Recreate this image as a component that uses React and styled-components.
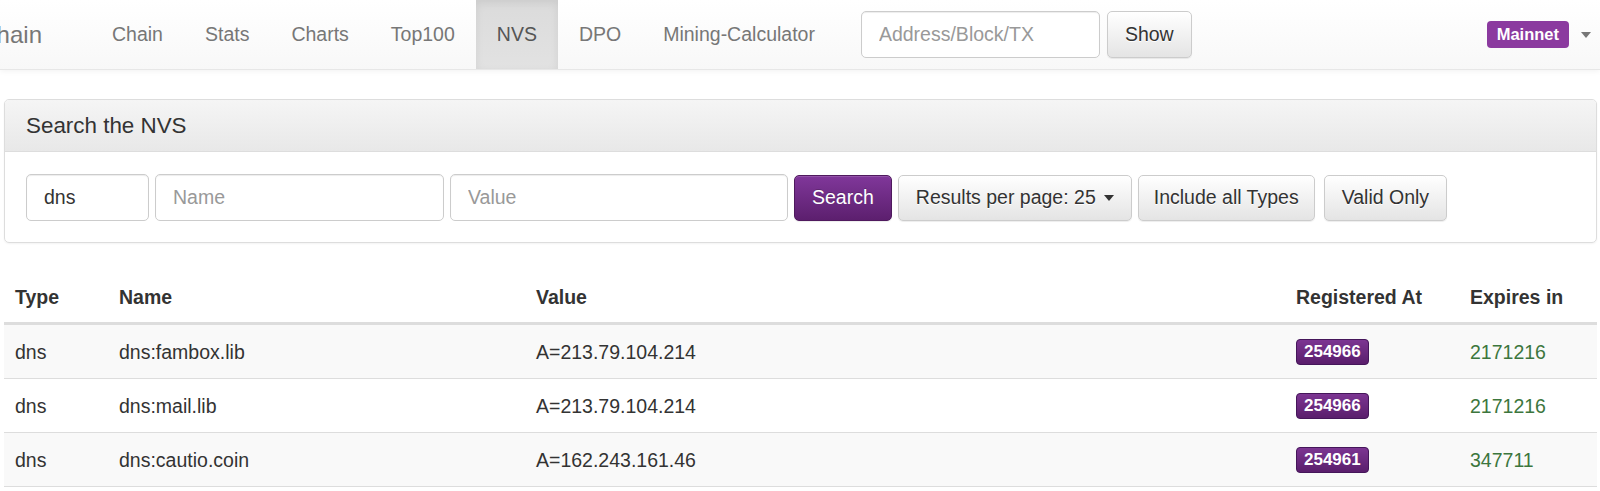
import React from "react";
import styled, { createGlobalStyle } from "styled-components";

const GlobalStyle = createGlobalStyle`
  body {
    margin: 0;
    background: #fff;
    font-family: "Liberation Sans", Arial, Helvetica, sans-serif;
    font-size: 19.5px;
    color: #333;
  }
`;

const Navbar = styled.nav`
  display: flex;
  align-items: center;
  height: 69px;
  background: linear-gradient(to bottom, #ffffff 0%, #f8f8f8 100%);
  border-bottom: 1px solid #e7e7e7;
  box-shadow: 0 1px 6px rgba(0, 0, 0, 0.06);
`;

const Brand = styled.div`
  width: 42px;
  height: 69px;
  display: flex;
  align-items: center;
  justify-content: flex-end;
  overflow: hidden;
  font-size: 24px;
  color: #777;
  white-space: nowrap;
`;

const NavList = styled.ul`
  display: flex;
  list-style: none;
  margin: 0 0 0 49px;
  padding: 0;
  height: 69px;
`;

const NavLink = styled.li`
  display: flex;
  align-items: center;
  padding: 0 21px;
  color: ${(p) => (p.$active ? "#555" : "#777")};
  background: ${(p) =>
    p.$active ? "linear-gradient(to bottom, #dbdbdb 0%, #e2e2e2 100%)" : "transparent"};
  box-shadow: ${(p) => (p.$active ? "inset 0 3px 9px rgba(0,0,0,0.075)" : "none")};
`;

const NavForm = styled.form`
  display: flex;
  align-items: center;
  gap: 7px;
  margin-left: 25px;
`;

const TextInput = styled.input`
  box-sizing: border-box;
  width: ${(p) => p.$w}px;
  height: 47px;
  padding: 0 17px;
  border: 1px solid #ccc;
  border-radius: 5px;
  font-family: inherit;
  font-size: 19.5px;
  color: #333;
  background: #fff;
  box-shadow: inset 0 1px 1px rgba(0, 0, 0, 0.075);
  &::placeholder {
    color: #999;
  }
`;

const Button = styled.button`
  box-sizing: border-box;
  height: ${(p) => (p.$tall ? 47 : 46)}px;
  padding: 0 ${(p) => p.$padX || 17}px;
  margin-left: ${(p) => p.$gapLeft || 0}px;
  border-radius: 5px;
  font-family: inherit;
  font-size: 19.5px;
  white-space: nowrap;
  border: 1px solid ${(p) => (p.$primary ? "#4f1a5e" : "#ccc")};
  color: ${(p) => (p.$primary ? "#fff" : "#333")};
  background: ${(p) =>
    p.$primary
      ? "linear-gradient(to bottom, #80379a 0%, #5c1f6e 100%)"
      : "linear-gradient(to bottom, #ffffff 0%, #e4e4e4 100%)"};
  text-shadow: ${(p) => (p.$primary ? "0 -1px 0 rgba(0,0,0,0.2)" : "0 1px 0 #fff")};
  box-shadow: inset 0 1px 0 rgba(255, 255, 255, 0.15), 0 1px 1px rgba(0, 0, 0, 0.075);
  display: inline-flex;
  align-items: center;
  gap: 8px;
`;

const Caret = styled.span`
  display: inline-block;
  width: 0;
  height: 0;
  border-left: 5px solid transparent;
  border-right: 5px solid transparent;
  border-top: 6px solid ${(p) => p.$color || "#333"};
`;

const NavRight = styled.div`
  margin-left: auto;
  display: flex;
  align-items: center;
  gap: 12px;
  padding-right: 9px;
`;

const NetLabel = styled.span`
  display: inline-flex;
  align-items: center;
  height: 27px;
  padding: 0 10px;
  border-radius: 4px;
  background: #8b3a9f;
  color: #fff;
  font-weight: bold;
  font-size: 16.5px;
`;

const Panel = styled.section`
  margin: 29px 3px 0 4px;
  border: 1px solid #ddd;
  border-radius: 5px;
  box-shadow: 0 1px 2px rgba(0, 0, 0, 0.05);
  overflow: hidden;
`;

const PanelHeading = styled.div`
  height: 51px;
  display: flex;
  align-items: center;
  padding: 0 21px;
  background: linear-gradient(to bottom, #f5f5f5 0%, #e8e8e8 100%);
  border-bottom: 1px solid #ddd;
`;

const PanelTitle = styled.h3`
  margin: 0;
  font-size: 22.4px;
  font-weight: normal;
  color: #333;
`;

const PanelBody = styled.div`
  display: flex;
  align-items: center;
  gap: 6px;
  padding: 22px 21px 21px 21px;
`;

const Table = styled.table`
  width: calc(100% - 7px);
  margin: 29px 3px 0 4px;
  border-collapse: collapse;
  table-layout: fixed;
`;

const Th = styled.th`
  text-align: left;
  font-weight: bold;
  padding: 11px 11px;
  line-height: 28px;
  border-bottom: 3px solid #ddd;
`;

const Row = styled.tr`
  background: ${(p) => (p.$striped ? "#f9f9f9" : "#fff")};
  border-bottom: 1px solid #ddd;
`;

const Td = styled.td`
  padding: 13px 11px 12px;
  line-height: 28px;
  color: ${(p) => (p.$success ? "#3c763d" : "#333")};
`;

const BlockLabel = styled.span`
  display: inline-block;
  box-sizing: border-box;
  height: 26px;
  line-height: 24px;
  padding: 0 7px;
  border-radius: 4px;
  border: 1px solid #45165a;
  background: linear-gradient(to bottom, #7c3592 0%, #5a1e6c 100%);
  color: #fff;
  font-weight: bold;
  font-size: 17px;
  vertical-align: top;
  margin-top: 1px;
`;

const navItems = ["Chain", "Stats", "Charts", "Top100", "NVS", "DPO", "Mining-Calculator"];

const rows = [
  { type: "dns", name: "dns:fambox.lib", value: "A=213.79.104.214", block: "254966", expires: "2171216" },
  { type: "dns", name: "dns:mail.lib", value: "A=213.79.104.214", block: "254966", expires: "2171216" },
  { type: "dns", name: "dns:cautio.coin", value: "A=162.243.161.46", block: "254961", expires: "347711" },
];

export default function App() {
  return (
    <>
      <GlobalStyle />
      <Navbar>
        <Brand>Emercoin Blockchain</Brand>
        <NavList>
          {navItems.map((item) => (
            <NavLink key={item} $active={item === "NVS"}>
              {item}
            </NavLink>
          ))}
        </NavList>
        <NavForm onSubmit={(e) => e.preventDefault()}>
          <TextInput $w={239} placeholder="Address/Block/TX" />
          <Button $tall>Show</Button>
        </NavForm>
        <NavRight>
          <NetLabel>Mainnet</NetLabel>
          <Caret $color="#777" />
        </NavRight>
      </Navbar>

      <Panel>
        <PanelHeading>
          <PanelTitle>Search the NVS</PanelTitle>
        </PanelHeading>
        <PanelBody>
          <TextInput $w={123} defaultValue="dns" />
          <TextInput $w={289} placeholder="Name" />
          <TextInput $w={338} placeholder="Value" />
          <Button $primary>Search</Button>
          <Button>
            Results per page: 25 <Caret />
          </Button>
          <Button $padX={15}>Include all Types</Button>
          <Button $gapLeft={3}>Valid Only</Button>
        </PanelBody>
      </Panel>

      <Table>
        <colgroup>
          <col style={{ width: 104 }} />
          <col style={{ width: 417 }} />
          <col style={{ width: 760 }} />
          <col style={{ width: 174 }} />
          <col />
        </colgroup>
        <thead>
          <tr>
            <Th>Type</Th>
            <Th>Name</Th>
            <Th>Value</Th>
            <Th>Registered At</Th>
            <Th>Expires in</Th>
          </tr>
        </thead>
        <tbody>
          {rows.map((r, i) => (
            <Row key={i} $striped={i % 2 === 0}>
              <Td>{r.type}</Td>
              <Td>{r.name}</Td>
              <Td>{r.value}</Td>
              <Td>
                <BlockLabel>{r.block}</BlockLabel>
              </Td>
              <Td $success>{r.expires}</Td>
            </Row>
          ))}
        </tbody>
      </Table>
    </>
  );
}
